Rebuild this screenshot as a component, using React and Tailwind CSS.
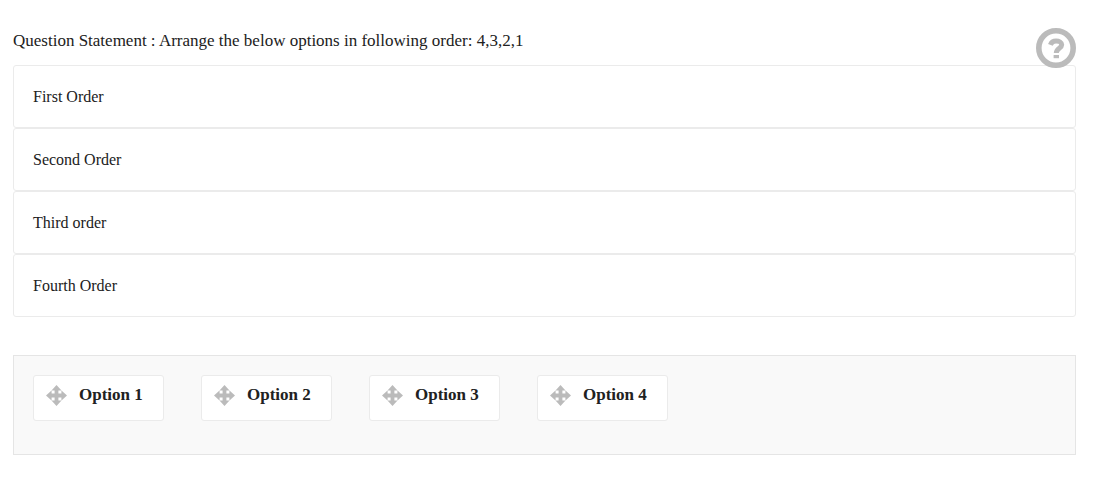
const answers = ["First Order", "Second Order", "Third order", "Fourth Order"];
const options = ["Option 1", "Option 2", "Option 3", "Option 4"];

function MoveIcon() {
  return (
    <svg viewBox="0 0 21 21" className="size-[21px] shrink-0 fill-[#bbbbbb]" aria-hidden="true">
      <path
        fillRule="evenodd"
        d="M10.5 0L15.5 5.5L21 10.5L15.5 15.5L10.5 21L5.5 15.5L0 10.5L5.5 5.5ZM5.6 5.6V8.6H8.6V5.6ZM12.4 5.6V8.6H15.4V5.6ZM5.6 12.4V15.4H8.6V12.4ZM12.4 12.4V15.4H15.4V12.4Z"
      />
    </svg>
  );
}

function HelpIcon() {
  return (
    <svg viewBox="0 0 40 40" className="size-10" fill="none" aria-hidden="true">
      <circle cx="20" cy="20" r="17.2" fill="white" stroke="#bbbbbb" strokeWidth="5.6" />
      <path
        d="M14.4 16.8C15.4 14.2 17.4 13 20 13C23.2 13 25.7 14.4 25.7 16.8C25.7 20.4 20.3 20.2 20.3 25"
        stroke="#bbbbbb"
        strokeWidth="5"
      />
      <path d="M17.6 27H23V30.2H17.6Z" fill="#bbbbbb" />
    </svg>
  );
}

export default function App() {
  return (
    <main className="bg-white pt-7 pr-[26px] pb-8 pl-[13px] font-['Liberation_Serif',serif] text-[#212121]">
      <div className="relative">
        <h1 className="h-[37px] text-[17px] leading-[26px]">
          Question Statement : Arrange the below options in following order: 4,3,2,1
        </h1>
        <button type="button" aria-label="Help" className="absolute top-0 right-0">
          <HelpIcon />
        </button>
      </div>

      <ul>
        {answers.map((answer) => (
          <li
            key={answer}
            className="flex h-[63px] items-center rounded-[3px] border border-[#ebebeb] px-[19px] text-base"
          >
            {answer}
          </li>
        ))}
      </ul>

      <div className="mt-[38px] flex min-h-[100px] flex-wrap items-start gap-[37px] border border-[#e5e5e5] bg-[#f9f9f9] px-[19px] pt-[19px] pb-8">
        {options.map((option) => (
          <button
            key={option}
            type="button"
            className="flex h-[46px] w-[131px] cursor-move items-start gap-3 rounded-[3px] border border-[#ebebeb] bg-white pt-[9px] pl-3 text-left"
          >
            <MoveIcon />
            <span className="text-[17px] leading-5 font-bold">{option}</span>
          </button>
        ))}
      </div>
    </main>
  );
}
